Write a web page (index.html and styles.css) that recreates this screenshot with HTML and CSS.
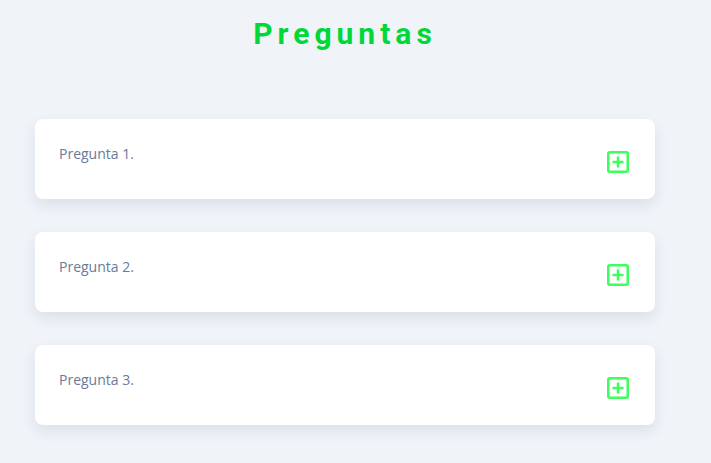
FILE: index.html
```html
<!DOCTYPE html>
<html lang="es">
<head>
<meta charset="utf-8">
<title>Preguntas</title>
<link rel="stylesheet" href="styles.css">
</head>
<body>
<main class="faq">
  <h1 class="faq-title">Preguntas</h1>
  <div class="faq-list">
    <div class="faq-item">
      <p class="faq-question">Pregunta 1.</p>
      <svg class="faq-icon" viewBox="0 0 22 22" width="22" height="22"><rect x="1.25" y="1.25" width="19.5" height="19.5" rx="1.5" fill="none" stroke="#3cff5c" stroke-width="2.5"/><path d="M11 5.5v11M5.5 11h11" stroke="#3cff5c" stroke-width="2.5" fill="none"/></svg>
    </div>
    <div class="faq-item">
      <p class="faq-question">Pregunta 2.</p>
      <svg class="faq-icon" viewBox="0 0 22 22" width="22" height="22"><rect x="1.25" y="1.25" width="19.5" height="19.5" rx="1.5" fill="none" stroke="#3cff5c" stroke-width="2.5"/><path d="M11 5.5v11M5.5 11h11" stroke="#3cff5c" stroke-width="2.5" fill="none"/></svg>
    </div>
    <div class="faq-item">
      <p class="faq-question">Pregunta 3.</p>
      <svg class="faq-icon" viewBox="0 0 22 22" width="22" height="22"><rect x="1.25" y="1.25" width="19.5" height="19.5" rx="1.5" fill="none" stroke="#3cff5c" stroke-width="2.5"/><path d="M11 5.5v11M5.5 11h11" stroke="#3cff5c" stroke-width="2.5" fill="none"/></svg>
    </div>
  </div>
</main>
</body>
</html>
```

FILE: styles.css
```css
html, body {
  margin: 0;
  padding: 0;
}
body {
  background: #f0f3f8;
  font-family: "Open Sans", "Liberation Sans", sans-serif;
  min-height: 463px;
}
.faq {
  width: 620px;
  margin-left: 35px;
  padding-top: 16px;
  padding-bottom: 30px;
}
.faq-title {
  margin: 0;
  text-align: center;
  font-family: Roboto, "Liberation Sans", sans-serif;
  font-weight: 700;
  font-size: 30px;
  line-height: 36px;
  letter-spacing: 5px;
  color: #00d83a;
}
.faq-list {
  display: flex;
  flex-direction: column;
  gap: 33px;
  margin-top: 67px;
}
.faq-item {
  height: 80px;
  box-sizing: border-box;
  background: #fff;
  border-radius: 8px;
  box-shadow: 0 6px 14px rgba(40, 60, 100, 0.10);
  display: flex;
  justify-content: space-between;
  align-items: flex-start;
  padding: 25px 26px 0 24px;
}
.faq-question {
  margin: 0;
  font-size: 14px;
  line-height: 19px;
  color: #6a7a9a;
}
.faq-icon {
  display: block;
  margin-top: 7px;
}
```
